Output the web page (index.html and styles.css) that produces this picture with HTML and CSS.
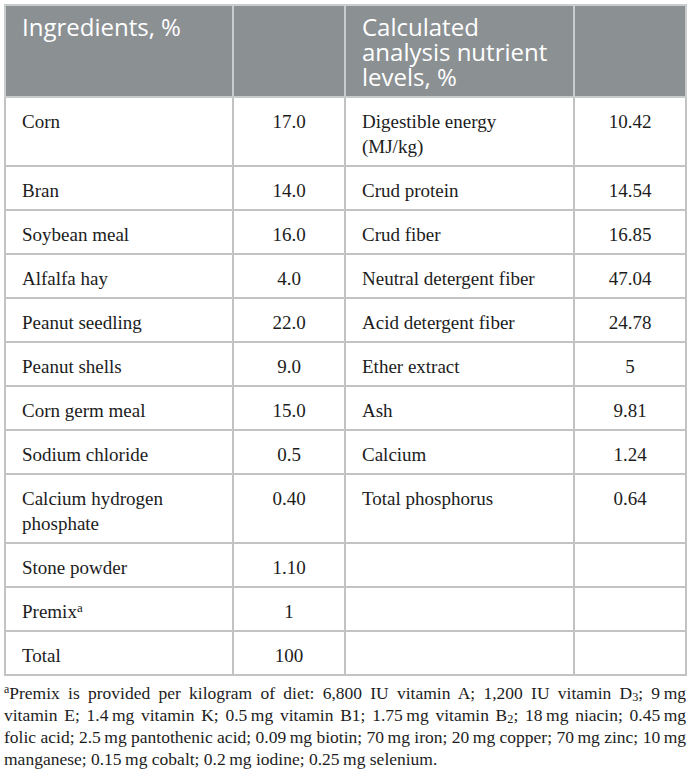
FILE: index.html
```html
<!DOCTYPE html>
<html>
<head>
<meta charset="utf-8">
<link rel="stylesheet" href="styles.css">
</head>
<body>
<div class="page">
<table class="diet">
<colgroup>
<col class="c-name"><col class="c-val"><col class="c-name2"><col class="c-val">
</colgroup>
<thead>
<tr>
<th class="h">Ingredients, %</th>
<th class="h"></th>
<th class="h">Calculated analysis nutrient levels, %</th>
<th class="h"></th>
</tr>
</thead>
<tbody>
<tr><td>Corn</td><td class="v">17.0</td><td class="n2">Digestible energy (MJ/kg)</td><td class="v">10.42</td></tr>
<tr><td>Bran</td><td class="v">14.0</td><td class="n2">Crud protein</td><td class="v">14.54</td></tr>
<tr><td>Soybean meal</td><td class="v">16.0</td><td class="n2">Crud fiber</td><td class="v">16.85</td></tr>
<tr><td>Alfalfa hay</td><td class="v">4.0</td><td class="n2">Neutral detergent fiber</td><td class="v">47.04</td></tr>
<tr><td>Peanut seedling</td><td class="v">22.0</td><td class="n2">Acid detergent fiber</td><td class="v">24.78</td></tr>
<tr><td>Peanut shells</td><td class="v">9.0</td><td class="n2">Ether extract</td><td class="v">5</td></tr>
<tr><td>Corn germ meal</td><td class="v">15.0</td><td class="n2">Ash</td><td class="v">9.81</td></tr>
<tr><td>Sodium chloride</td><td class="v">0.5</td><td class="n2">Calcium</td><td class="v">1.24</td></tr>
<tr><td>Calcium hydrogen phosphate</td><td class="v">0.40</td><td class="n2">Total phosphorus</td><td class="v">0.64</td></tr>
<tr><td>Stone powder</td><td class="v">1.10</td><td class="n2"></td><td class="v"></td></tr>
<tr><td>Premix<sup class="sup">a</sup></td><td class="v">1</td><td class="n2"></td><td class="v"></td></tr>
<tr><td>Total</td><td class="v">100</td><td class="n2"></td><td class="v"></td></tr>
</tbody>
</table>
<div class="note">
<span class="ln"><sup class="sup">a</sup>Premix is provided per kilogram of diet: 6,800 IU vitamin A; 1,200 IU vitamin D<sub class="sub">3</sub>; 9&thinsp;mg</span>
<span class="ln">vitamin E; 1.4&thinsp;mg vitamin K; 0.5&thinsp;mg vitamin B1; 1.75&thinsp;mg vitamin B<sub class="sub">2</sub>; 18&thinsp;mg niacin; 0.45&thinsp;mg</span>
<span class="ln">folic acid; 2.5&thinsp;mg pantothenic acid; 0.09&thinsp;mg biotin; 70&thinsp;mg iron; 20&thinsp;mg copper; 70&thinsp;mg zinc; 10&thinsp;mg</span>
<span class="ln last">manganese; 0.15&thinsp;mg cobalt; 0.2&thinsp;mg iodine; 0.25&thinsp;mg selenium.</span>
</div>
</div>
</body>
</html>
```
FILE: styles.css
```css
html, body {
  margin: 0;
  padding: 0;
  background: #ffffff;
}
.page {
  padding: 4px 3px 0 4px;
}
.diet {
  width: 682px;
  border-collapse: collapse;
  table-layout: fixed;
  font-family: "Liberation Serif", "Times New Roman", serif;
  font-size: 19px;
  color: #1c1c1c;
}
.c-name { width: 228px; }
.c-val { width: 112px; }
.c-name2 { width: 229px; }
.diet th, .diet td {
  border: 2px solid #c3c3c3;
  vertical-align: top;
  text-align: left;
  line-height: 25px;
}
.diet th.h {
  background: #8b9093;
  color: #ffffff;
  font-family: "Open Sans", "Liberation Sans", sans-serif;
  font-weight: 400;
  font-size: 24px;
  padding: 8px 12px 7px 16px;
  height: 75px;
  border-color: #c9cccd;
}
.diet td {
  padding: 11px 16px 6px 16px;
}
.diet td.n2 {
  padding-right: 22px;
}
.diet td.v {
  text-align: center;
}
.sup {
  font-size: 0.68em;
  line-height: 0;
  vertical-align: 0.5em;
}
.sub {
  font-size: 0.7em;
  line-height: 0;
  vertical-align: -0.2em;
}
.note {
  margin: 6px 0 0 0;
  width: 682px;
  font-family: "Liberation Serif", "Times New Roman", serif;
  font-size: 17.5px;
  line-height: 22px;
  color: #1c1c1c;
}
.ln {
  display: block;
  white-space: nowrap;
  text-align: justify;
  text-align-last: justify;
}
.ln.last {
  text-align: left;
  text-align-last: left;
}
```
